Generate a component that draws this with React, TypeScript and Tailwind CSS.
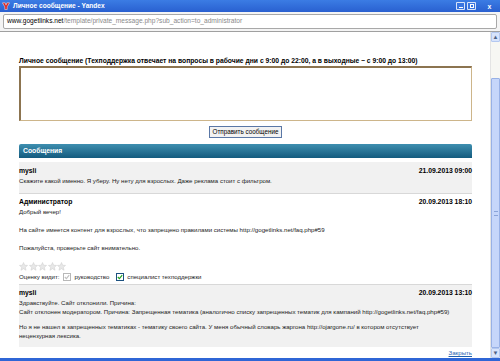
import React from "react";

function Star() {
  return (
    <svg width="9" height="9" viewBox="0 0 10 10">
      <path
        d="M5 0.6 L6.3 3.6 L9.5 3.8 L7 5.9 L7.8 9.2 L5 7.4 L2.2 9.2 L3 5.9 L0.5 3.8 L3.7 3.6 Z"
        fill="#e8e8e8"
        stroke="#cfcfcf"
        strokeWidth="0.6"
      />
    </svg>
  );
}

function Check({ on }: { on?: boolean }) {
  return (
    <span
      className={`inline-flex h-[8px] w-[8px] items-center justify-center border bg-white ${
        on ? "border-[#1c5180]" : "border-[#b8b8b8]"
      }`}
    >
      <svg width="6" height="6" viewBox="0 0 6 6">
        <path
          d="M0.8 3 L2.4 4.6 L5.2 1.2"
          fill="none"
          stroke={on ? "#21a121" : "#c0c0c0"}
          strokeWidth="1.2"
        />
      </svg>
    </span>
  );
}

function Head({ author, date }: { author: string; date: string }) {
  return (
    <div className="flex items-center justify-between text-[6.8px] font-bold leading-[10px] text-black">
      <span>{author}</span>
      <span>{date}</span>
    </div>
  );
}

export default function App() {
  return (
    <div
      className="flex h-[361px] w-[500px] flex-col overflow-hidden bg-white"
      style={{ fontFamily: "'Liberation Sans', Arial, sans-serif" }}
    >
      {/* title bar */}
      <div className="flex h-[12px] items-center justify-between bg-gradient-to-b from-[#3b7ce4] to-[#2a60d0] px-[2px]">
        <div className="flex items-center gap-[3px]">
          <svg width="8" height="8" viewBox="0 0 10 10">
            <path d="M0.5 1 L4 1 L5 4 L6 1 L9.5 1 L6.5 6 L6.5 9.5 L3.5 9.5 L3.5 6 Z" fill="#e0231b" stroke="#fff" strokeWidth="0.6" />
          </svg>
          <span className="text-[6.6px] font-bold leading-none text-white">Личное сообщение - Yandex</span>
        </div>
        <div className="flex items-center gap-[2px] pr-[3px]">
          <span className="flex h-[8px] w-[9px] items-end justify-center rounded-[1px] border border-white/80 bg-[#3a75e0] pb-[1px]">
            <span className="h-[1px] w-[4px] bg-white" />
          </span>
          <span className="flex h-[8px] w-[9px] items-center justify-center rounded-[1px] border border-white/80 bg-[#3a75e0]">
            <span className="h-[4px] w-[4px] border border-white" />
          </span>
          <span className="ml-[6px] flex h-[8px] w-[11px] items-center justify-center text-[7px] font-bold leading-none text-white">
            x
          </span>
        </div>
      </div>

      {/* address bar */}
      <div className="flex h-[20px] items-center border-b border-[#a0a0a0] bg-[#f4f4f4] px-[3px]">
        <div className="flex h-[15px] flex-1 items-center rounded-[2px] border border-[#a8a8a8] bg-white px-[3px] text-[6.6px] leading-none">
          <span className="text-black">www.gogetlinks.net</span>
          <span className="text-[#8a8a8a]">/template/private_message.php?sub_action=to_administrator</span>
        </div>
      </div>

      <div className="flex min-h-0 flex-1">
        {/* page */}
        <div className="flex-1 pl-[19px] pr-[18px]">
          <div className="pt-[24px] text-[6.75px] font-bold leading-[9px] text-black">
            Личное сообщение (Техподдержка отвечает на вопросы в рабочие дни с 9:00 до 22:00, а в выходные – с 9:00 до 13:00)
          </div>
          <div className="mt-[1px] h-[55px] border border-t-2 border-l-2 border-[#cdb58a] border-t-[#8c7450] border-l-[#8c7450] bg-white" />
          <div className="flex justify-center pt-[5px]">
            <button className="h-[12px] border border-[#5a77a6] bg-[#f2f2f2] px-[3px] text-[6.3px] leading-none text-black">
              Отправить сообщение
            </button>
          </div>

          <div className="mt-[6px] flex h-[14px] items-center rounded-t-[2px] bg-gradient-to-b from-[#3e8fb0] to-[#135b7e] px-[4px] text-[6.8px] font-bold text-white">
            Сообщения
          </div>

          <div className="mt-[4px] text-[6.1px] leading-[9px] text-[#222]">
            <div className="border-b border-[#d8d8d8] bg-[#f1f1f1] pt-[4px] pb-[8px]">
              <Head author="mysli" date="21.09.2013 09:00" />
              <p>Скажите какой именно. Я уберу. Ну нету для взрослых. Даже реклама стоит с фильтром.</p>
            </div>

            <div className="border-b border-[#d8d8d8] bg-white pt-[3px] pb-[3px]">
              <Head author="Администратор" date="20.09.2013 18:10" />
              <p>Добрый вечер!</p>
              <p className="mt-[9px]">
                На сайте имеется контент для взрослых, что запрещено правилами системы http://gogetlinks.net/faq.php#59
              </p>
              <p className="mt-[9px]">Пожалуйста, проверьте сайт внимательно.</p>
              <div className="mt-[10px] flex gap-[0.5px]">
                <Star />
                <Star />
                <Star />
                <Star />
                <Star />
              </div>
              <div className="mt-[1px] flex items-center">
                <span>Оценку видит:</span>
                <span className="ml-[4px] flex"><Check /></span>
                <span className="ml-[3px]">руководство</span>
                <span className="ml-[7px] flex"><Check on /></span>
                <span className="ml-[3px]">специалист техподдержки</span>
              </div>
            </div>

            <div className="bg-[#f1f1f1] pt-[3px] pb-[7px]">
              <Head author="mysli" date="20.09.2013 13:10" />
              <p>Здравствуйте. Сайт отклонили. Причина:</p>
              <p>
                Сайт отклонен модератором. Причина: Запрещенная тематика (аналогично списку запрещенных тематик для кампаний http://gogetlinks.net/faq.php#59)
              </p>
              <p className="mt-[6px]">
                Но я не нашел в запрещенных тематиках - тематику своего сайта. У меня обычный словарь жаргона http://ojargone.ru/ в котором отсутствует
                <br />
                нецензурная лексика.
              </p>
            </div>
            <div className="flex justify-end pt-[1px]">
              <span className="text-[#1f5fb0] underline">Закрыть</span>
            </div>
          </div>
        </div>

        {/* scrollbar */}
        <div className="flex w-[10px] flex-col border-l border-[#e4e4e4] bg-[#f7f7f3]">
          <div className="flex h-[10px] items-center justify-center rounded-[1px] border border-[#b4c8f0] bg-[#d7e3fb] text-[6px] leading-none text-[#4d6185]">
            ▲
          </div>
          <div className="h-[36px]" />
          <div className="flex flex-1 items-center justify-center rounded-[1px] border border-[#98b1e6] bg-[#c6d6fa]">
            <span className="h-[5px] w-[4px] border-y border-[#8aa3d8]" />
          </div>
          <div className="flex h-[10px] items-center justify-center rounded-[1px] border border-[#b4c8f0] bg-[#d7e3fb] text-[6px] leading-none text-[#4d6185]">
            ▼
          </div>
        </div>
      </div>

      {/* window bottom border */}
      <div className="h-[3px] bg-[#2f66d6]" />
    </div>
  );
}
